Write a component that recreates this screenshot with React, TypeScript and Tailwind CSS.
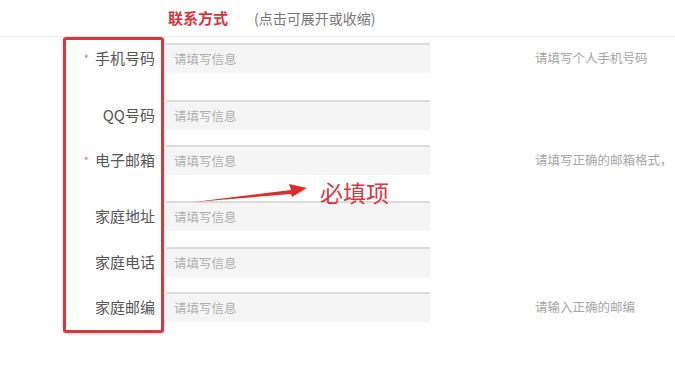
import React from "react";

type Field = {
  label: string;
  required?: boolean;
  hint?: string;
  gap: string;
};

const fields: Field[] = [
  { label: "手机号码", required: true, hint: "请填写个人手机号码", gap: "mt-[6px]" },
  { label: "QQ号码", gap: "mt-[27px]" },
  { label: "电子邮箱", required: true, hint: "请填写正确的邮箱格式，", gap: "mt-[15px]" },
  { label: "家庭地址", gap: "mt-[26px]" },
  { label: "家庭电话", gap: "mt-[16px]" },
  { label: "家庭邮编", hint: "请输入正确的邮编", gap: "mt-[15px]" },
];

export default function App() {
  return (
    <div
      className="relative h-[368px] w-[675px] overflow-hidden bg-white"
      style={{ fontFamily: '"Noto Sans CJK SC", "Noto Sans", sans-serif' }}
    >
      <header className="flex h-[36px] items-center pl-[168px]">
        <span className="text-[15px] font-bold text-[#d8323c]">联系方式</span>
        <span className="ml-[26px] text-[14px] text-[#777]">(点击可展开或收缩)</span>
      </header>
      <div className="h-px w-full bg-[#ececec]" />

      <div className="flex flex-col">
        {fields.map((field) => (
          <div key={field.label} className={`flex h-[30px] items-center ${field.gap}`}>
            <div className="flex w-[157px] items-center justify-end pr-[2px] text-[15px] text-[#555]">
              {field.required ? (
                <span className="mr-[6px] text-[11px] text-[#d87a80]">*</span>
              ) : null}
              {field.label}
            </div>
            <div className="ml-[9px] flex h-[30px] w-[264px] items-center border-t-2 border-[#dcdcdc] bg-[#f5f5f5] pl-[8px] text-[12.5px] text-[#b0b0b0]">
              请填写信息
            </div>
            {field.hint ? (
              <span className="ml-[105px] text-[12.5px] text-[#a6a6a6]">{field.hint}</span>
            ) : null}
          </div>
        ))}
      </div>

      {/* annotation overlays */}
      <div className="absolute left-[63px] top-[37px] h-[296px] w-[101px] rounded-[3px] border-[3px] border-[#d9363e] shadow-[0_1px_3px_rgba(0,0,0,0.2)]" />
      <svg className="absolute left-[190px] top-[180px]" width="122" height="26" viewBox="0 0 122 26">
        <polygon points="4,22 101,10 99,4 117,8 102,17 101,14" fill="#dd2c2c" />
      </svg>
      <span className="absolute left-[320px] top-[177px] text-[23px] leading-[30px] text-[#d9363e]">必填项</span>
    </div>
  );
}
